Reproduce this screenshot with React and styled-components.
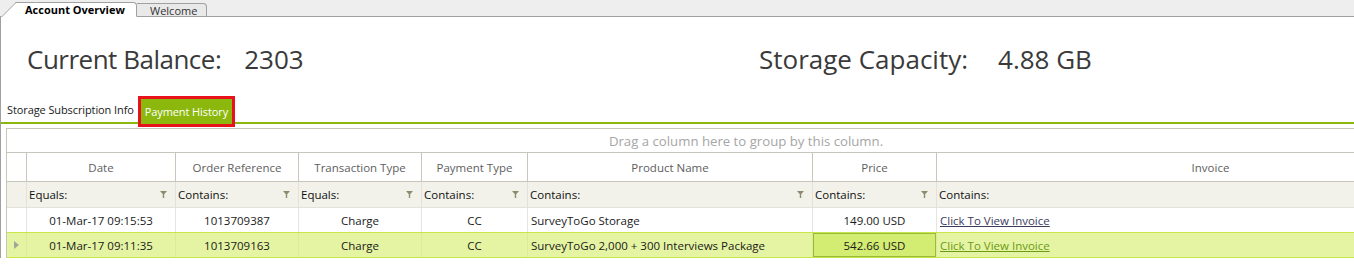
import React from 'react'
import styled, { createGlobalStyle } from 'styled-components'

const GlobalStyle = createGlobalStyle`
    html, body {
        margin: 0;
        padding: 0;
        background: #ffffff;
        overflow: hidden;
    }
    body {
        font-family: 'Open Sans', 'Noto Sans', sans-serif;
        color: #000;
    }
`

const Page = styled.div`
    width: 1354px;
    height: 269px;
    overflow: hidden;
`

const TopTabs = styled.div`
    display: flex;
    align-items: flex-end;
    height: 16px;
    background: #eeeeee;
    border-bottom: 1px solid #a0a0a0;
    padding-left: 2px;
`

const DocTab = styled.div`
    position: relative;
    box-sizing: border-box;
    height: ${(p) => (p.$active ? 15 : 14)}px;
    margin-bottom: -1px;
    font-size: 11px;
    line-height: 13px;
    display: flex;
    align-items: center;
    z-index: ${(p) => (p.$active ? 2 : 1)};
    color: ${(p) => (p.$active ? '#000' : '#333')};
    font-weight: ${(p) => (p.$active ? 700 : 400)};
    width: ${(p) => p.$width}px;
    padding-left: ${(p) => p.$pad}px;
    background: ${(p) => (p.$active ? '#ffffff' : '#e9e9e9')};
    border-top: 1px solid #a0a0a0;
    border-right: 1px solid #a0a0a0;
    border-bottom: ${(p) => (p.$active ? '1px solid #ffffff' : '1px solid #a0a0a0')};
    border-top-right-radius: 4px;
    ${(p) =>
        p.$active &&
        `
        margin-left: 14px;
        &::before {
            content: '';
            position: absolute;
            left: -15px;
            top: -1px;
            bottom: -1px;
            width: 20px;
            background: #ffffff;
            border-left: 1px solid #a0a0a0;
            border-top: 1px solid #a0a0a0;
            transform: skewX(-45deg);
            transform-origin: bottom left;
            z-index: -1;
        }
    `}
`

const Content = styled.div`
    border-left: 1px solid #a0a0a0;
`

const Summary = styled.div`
    display: grid;
    grid-template-columns: 732px auto;
    padding: 25px 0 0 26px;
    height: 53px;
    font-size: 26px;
    color: #3a3a3a;
    line-height: 34px;
`

const Stat = styled.div`
    display: flex;
    gap: ${(p) => p.$gap}px;
    white-space: nowrap;
`

const StatLabel = styled.span`
    letter-spacing: ${(p) => p.$spacing || 0}px;
`

const SubTabs = styled.div`
    display: flex;
    align-items: flex-end;
    height: 26px;
    margin-top: 1px;
    border-bottom: 2px solid #8cb80e;
    padding-left: 6px;
    font-size: 11px;
`

const SubTab = styled.div`
    height: 25px;
    display: flex;
    align-items: center;
    padding: 0 ${(p) => (p.$active ? 4 : 0)}px;
    margin-left: ${(p) => (p.$active ? 7 : 0)}px;
    color: ${(p) => (p.$active ? '#ffffff' : '#1a1a1a')};
    background: ${(p) => (p.$active ? '#8cb80e' : 'transparent')};
    outline: ${(p) => (p.$active ? '3px solid #e8121c' : 'none')};
    outline-offset: 0;
    position: relative;
    top: ${(p) => (p.$active ? 2 : 0)}px;
    white-space: nowrap;
    letter-spacing: -0.1px;
`

const Grid = styled.div`
    margin: 4px 0 0 5px;
    width: 1478px;
    border-top: 1px solid #c6c6ba;
    border-left: 1px solid #c6c6ba;
    font-size: 11.5px;
`

const GroupPanel = styled.div`
    height: 23px;
    border-bottom: 1px solid #c6c6ba;
    display: flex;
    align-items: center;
    justify-content: center;
    color: #a6a6a6;
    font-size: 13.2px;
`

const Row = styled.div`
    display: flex;
    box-sizing: border-box;
    height: ${(p) => p.$h}px;
    background: ${(p) => p.$bg || '#ffffff'};
    border-bottom: 1px solid ${(p) => p.$line || '#e6e6e0'};
    ${(p) =>
        p.$selected &&
        `
        margin-top: -1px;
        border-top: 1px solid #c6e64a;
        border-bottom: 1px solid #c6e64a;
    `}
`

const Cell = styled.div`
    box-sizing: border-box;
    flex: 0 0 ${(p) => p.$w}px;
    display: flex;
    align-items: center;
    justify-content: ${(p) => p.$align || 'flex-start'};
    padding: 0 ${(p) => (p.$align === 'center' ? 0 : 3)}px;
    border-right: 1px solid ${(p) => p.$line || '#e6e6e0'};
    white-space: nowrap;
    overflow: hidden;
    color: ${(p) => p.$color || '#1a1a1a'};
    ${(p) =>
        p.$focused &&
        `
        background: #d3ec72;
        box-shadow: inset 0 0 0 1px #9abb3a;
    `}
`

const FilterCell = styled(Cell)`
    justify-content: space-between;
    padding-left: 2px;
    padding-right: 8px;
    color: #111;
`

const InvoiceLink = styled.a`
    color: ${(p) => (p.$selected ? '#6a9a16' : '#3c3c5c')};
    text-decoration: underline;
    cursor: pointer;
`

const columns = [
    { key: 'date', title: 'Date', w: 149, align: 'center', filter: 'Equals:' },
    { key: 'order', title: 'Order Reference', w: 123, align: 'center', filter: 'Contains:' },
    { key: 'type', title: 'Transaction Type', w: 123, align: 'center', filter: 'Equals:' },
    { key: 'pay', title: 'Payment Type', w: 106, align: 'center', filter: 'Contains:' },
    { key: 'product', title: 'Product Name', w: 285, align: 'left', filter: 'Contains:' },
    { key: 'price', title: 'Price', w: 124, align: 'center', filter: 'Contains:' },
    { key: 'invoice', title: 'Invoice', w: 548, align: 'left', filter: 'Contains:', noFunnel: true },
]

const rows = [
    {
        date: '01-Mar-17 09:15:53',
        order: '1013709387',
        type: 'Charge',
        pay: 'CC',
        product: 'SurveyToGo Storage',
        price: '149.00 USD',
    },
    {
        date: '01-Mar-17 09:11:35',
        order: '1013709163',
        type: 'Charge',
        pay: 'CC',
        product: 'SurveyToGo 2,000 + 300 Interviews Package',
        price: '542.66 USD',
        selected: true,
    },
]

function Funnel() {
    return (
        <svg width="7" height="7" viewBox="0 0 7 7">
            <path d="M0 0 H7 L4.2 3.2 V7 H2.8 V3.2 Z" fill="#8c8d6e" />
        </svg>
    )
}

function RowArrow() {
    return (
        <svg width="5" height="8" viewBox="0 0 5 8">
            <path d="M0 0 L5 4 L0 8 Z" fill="#a3a69a" />
        </svg>
    )
}

export default function App() {
    return (
        <Page>
            <GlobalStyle />
            <TopTabs>
                <DocTab $active $width={121} $pad={9}>
                    Account Overview
                </DocTab>
                <DocTab $width={70} $pad={13}>
                    Welcome
                </DocTab>
            </TopTabs>
            <Content>
                <Summary>
                    <Stat $gap={23}>
                        <StatLabel $spacing={-0.5}>Current Balance:</StatLabel>
                        <span>2303</span>
                    </Stat>
                    <Stat $gap={30}>
                        <StatLabel>Storage Capacity:</StatLabel>
                        <span>4.88 GB</span>
                    </Stat>
                </Summary>
                <SubTabs>
                    <SubTab>Storage Subscription Info</SubTab>
                    <SubTab $active>Payment History</SubTab>
                </SubTabs>
                <Grid>
                    <GroupPanel>Drag a column here to group by this column.</GroupPanel>
                    <Row $h={29} $line="#c6c6ba">
                        <Cell $w={20} $line="#c6c6ba" />
                        {columns.map((c) => (
                            <Cell key={c.key} $w={c.w} $align="center" $line="#c6c6ba" $color="#5e5e5e">
                                {c.title}
                            </Cell>
                        ))}
                    </Row>
                    <Row $h={26} $bg="#f2f2ea" $line="#e2e2da">
                        <Cell $w={20} $line="#e2e2da" />
                        {columns.map((c) => (
                            <FilterCell key={c.key} $w={c.w} $line="#e2e2da">
                                <span>{c.filter}</span>
                                {!c.noFunnel && <Funnel />}
                            </FilterCell>
                        ))}
                    </Row>
                    {rows.map((r) => (
                        <Row
                            key={r.order}
                            $h={r.selected ? 26 : 25}
                            $bg={r.selected ? '#e5f4a2' : '#ffffff'}
                            $selected={r.selected}
                        >
                            <Cell $w={20} $align="center" $line={r.selected ? '#dbeb96' : '#e6e6e0'}>
                                {r.selected && <RowArrow />}
                            </Cell>
                            {columns.map((c) => (
                                <Cell
                                    key={c.key}
                                    $w={c.w}
                                    $align={c.align === 'center' ? 'center' : 'left'}
                                    $line={r.selected ? '#dbeb96' : '#e6e6e0'}
                                    $focused={r.selected && c.key === 'price'}
                                >
                                    {c.key === 'invoice' ? (
                                        <InvoiceLink $selected={r.selected}>Click To View Invoice</InvoiceLink>
                                    ) : (
                                        r[c.key]
                                    )}
                                </Cell>
                            ))}
                        </Row>
                    ))}
                </Grid>
            </Content>
        </Page>
    )
}
